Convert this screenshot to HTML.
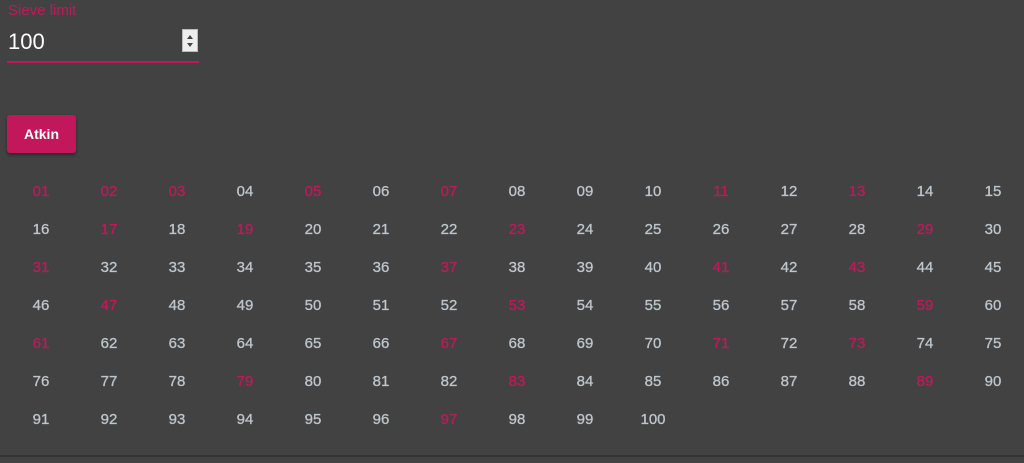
<!DOCTYPE html>
<html><head><style>
body{margin:0;width:1024px;height:463px;background:#424242;font-family:"Liberation Sans",sans-serif;overflow:hidden;position:relative}
.lbl{position:absolute;left:8px;top:2px;font-size:15px;color:#c2185b}
.val{position:absolute;left:8px;top:29px;font-size:22px;color:#fff}
.spin{position:absolute;left:182px;top:29px;width:16px;height:23px;background:#eee;border:1px solid #bbb;box-sizing:border-box}
.spin:before{content:"";position:absolute;left:4px;top:5px;border:3px solid transparent;border-bottom:4px solid #444;border-top:0}
.spin:after{content:"";position:absolute;left:4px;top:13px;border:3px solid transparent;border-top:4px solid #444;border-bottom:0}
.line{position:absolute;left:7px;top:61px;width:192px;height:2px;background:#c2185b}
.btn{position:absolute;left:7px;top:115px;width:69px;height:38px;background:#c2185b;border-radius:3px;box-shadow:0 2px 3px rgba(0,0,0,.4);color:#fff;font-weight:bold;font-size:14px;text-align:center;line-height:38px}
.grid{position:absolute;left:7px;top:173px;width:1020px;display:flex;flex-wrap:wrap}
.grid span{width:68px;height:38px;line-height:38px;text-align:center;font-size:15px;color:#bcc6cc;-webkit-text-stroke:0.3px currentColor}
.grid span.p{color:#c2185b}
.bot{position:absolute;left:0;top:455px;width:1024px;height:2px;background:#333}
</style></head><body>
<div class="lbl">Sieve limit</div>
<div class="val">100</div>
<div class="spin"></div>
<div class="line"></div>
<div class="btn">Atkin</div>
<div class="grid">
<span class="p">01</span><span class="p">02</span><span class="p">03</span><span>04</span><span class="p">05</span><span>06</span><span class="p">07</span><span>08</span><span>09</span><span>10</span><span class="p">11</span><span>12</span><span class="p">13</span><span>14</span><span>15</span>
<span>16</span><span class="p">17</span><span>18</span><span class="p">19</span><span>20</span><span>21</span><span>22</span><span class="p">23</span><span>24</span><span>25</span><span>26</span><span>27</span><span>28</span><span class="p">29</span><span>30</span>
<span class="p">31</span><span>32</span><span>33</span><span>34</span><span>35</span><span>36</span><span class="p">37</span><span>38</span><span>39</span><span>40</span><span class="p">41</span><span>42</span><span class="p">43</span><span>44</span><span>45</span>
<span>46</span><span class="p">47</span><span>48</span><span>49</span><span>50</span><span>51</span><span>52</span><span class="p">53</span><span>54</span><span>55</span><span>56</span><span>57</span><span>58</span><span class="p">59</span><span>60</span>
<span class="p">61</span><span>62</span><span>63</span><span>64</span><span>65</span><span>66</span><span class="p">67</span><span>68</span><span>69</span><span>70</span><span class="p">71</span><span>72</span><span class="p">73</span><span>74</span><span>75</span>
<span>76</span><span>77</span><span>78</span><span class="p">79</span><span>80</span><span>81</span><span>82</span><span class="p">83</span><span>84</span><span>85</span><span>86</span><span>87</span><span>88</span><span class="p">89</span><span>90</span>
<span>91</span><span>92</span><span>93</span><span>94</span><span>95</span><span>96</span><span class="p">97</span><span>98</span><span>99</span><span>100</span>
</div>
<div class="bot"></div>
</body></html>
